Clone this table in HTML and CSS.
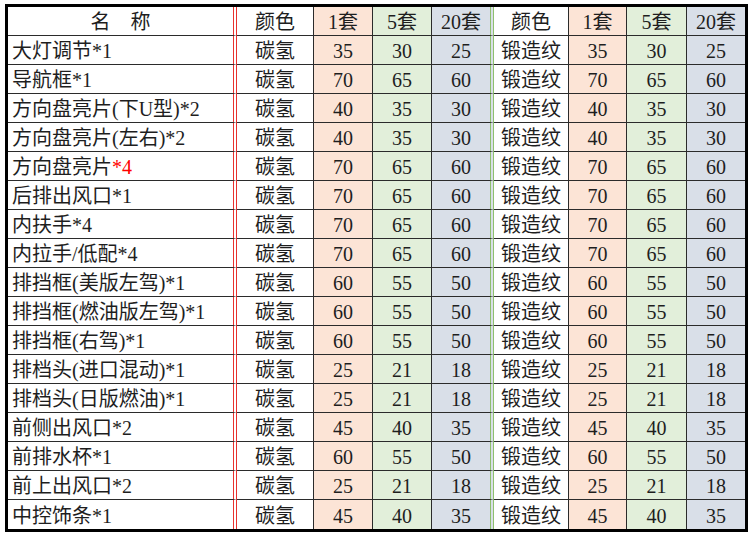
FILE: index.html
```html
<!DOCTYPE html>
<html lang="zh-CN">
<head>
<meta charset="utf-8">
<title>价格表</title>
<link rel="stylesheet" href="styles.css">
</head>
<body>
<table class="sheet">
  <tr class="head">
    <td class="name hname">名　称</td>
    <td class="color">颜色</td>
    <td class="p1">1套</td>
    <td class="p5">5套</td>
    <td class="p20 sep2">20套</td>
    <td class="color2">颜色</td>
    <td class="p1 w58">1套</td>
    <td class="p5 w60">5套</td>
    <td class="p20 w58">20套</td>
  </tr>
  <tr><td class="name">大灯调节*1</td><td class="color">碳氢</td><td class="p1">35</td><td class="p5">30</td><td class="p20 sep2">25</td><td class="color2">锻造纹</td><td class="p1">35</td><td class="p5">30</td><td class="p20">25</td></tr>
  <tr><td class="name">导航框*1</td><td class="color">碳氢</td><td class="p1">70</td><td class="p5">65</td><td class="p20 sep2">60</td><td class="color2">锻造纹</td><td class="p1">70</td><td class="p5">65</td><td class="p20">60</td></tr>
  <tr><td class="name">方向盘亮片(下U型)*2</td><td class="color">碳氢</td><td class="p1">40</td><td class="p5">35</td><td class="p20 sep2">30</td><td class="color2">锻造纹</td><td class="p1">40</td><td class="p5">35</td><td class="p20">30</td></tr>
  <tr><td class="name">方向盘亮片(左右)*2</td><td class="color">碳氢</td><td class="p1">40</td><td class="p5">35</td><td class="p20 sep2">30</td><td class="color2">锻造纹</td><td class="p1">40</td><td class="p5">35</td><td class="p20">30</td></tr>
  <tr><td class="name">方向盘亮片<span class="red">*4</span></td><td class="color">碳氢</td><td class="p1">70</td><td class="p5">65</td><td class="p20 sep2">60</td><td class="color2">锻造纹</td><td class="p1">70</td><td class="p5">65</td><td class="p20">60</td></tr>
  <tr><td class="name">后排出风口*1</td><td class="color">碳氢</td><td class="p1">70</td><td class="p5">65</td><td class="p20 sep2">60</td><td class="color2">锻造纹</td><td class="p1">70</td><td class="p5">65</td><td class="p20">60</td></tr>
  <tr><td class="name">内扶手*4</td><td class="color">碳氢</td><td class="p1">70</td><td class="p5">65</td><td class="p20 sep2">60</td><td class="color2">锻造纹</td><td class="p1">70</td><td class="p5">65</td><td class="p20">60</td></tr>
  <tr><td class="name">内拉手/低配*4</td><td class="color">碳氢</td><td class="p1">70</td><td class="p5">65</td><td class="p20 sep2">60</td><td class="color2">锻造纹</td><td class="p1">70</td><td class="p5">65</td><td class="p20">60</td></tr>
  <tr><td class="name">排挡框(美版左驾)*1</td><td class="color">碳氢</td><td class="p1">60</td><td class="p5">55</td><td class="p20 sep2">50</td><td class="color2">锻造纹</td><td class="p1">60</td><td class="p5">55</td><td class="p20">50</td></tr>
  <tr><td class="name">排挡框(燃油版左驾)*1</td><td class="color">碳氢</td><td class="p1">60</td><td class="p5">55</td><td class="p20 sep2">50</td><td class="color2">锻造纹</td><td class="p1">60</td><td class="p5">55</td><td class="p20">50</td></tr>
  <tr><td class="name">排挡框(右驾)*1</td><td class="color">碳氢</td><td class="p1">60</td><td class="p5">55</td><td class="p20 sep2">50</td><td class="color2">锻造纹</td><td class="p1">60</td><td class="p5">55</td><td class="p20">50</td></tr>
  <tr><td class="name">排档头(进口混动)*1</td><td class="color">碳氢</td><td class="p1">25</td><td class="p5">21</td><td class="p20 sep2">18</td><td class="color2">锻造纹</td><td class="p1">25</td><td class="p5">21</td><td class="p20">18</td></tr>
  <tr><td class="name">排档头(日版燃油)*1</td><td class="color">碳氢</td><td class="p1">25</td><td class="p5">21</td><td class="p20 sep2">18</td><td class="color2">锻造纹</td><td class="p1">25</td><td class="p5">21</td><td class="p20">18</td></tr>
  <tr><td class="name">前侧出风口*2</td><td class="color">碳氢</td><td class="p1">45</td><td class="p5">40</td><td class="p20 sep2">35</td><td class="color2">锻造纹</td><td class="p1">45</td><td class="p5">40</td><td class="p20">35</td></tr>
  <tr><td class="name">前排水杯*1</td><td class="color">碳氢</td><td class="p1">60</td><td class="p5">55</td><td class="p20 sep2">50</td><td class="color2">锻造纹</td><td class="p1">60</td><td class="p5">55</td><td class="p20">50</td></tr>
  <tr><td class="name">前上出风口*2</td><td class="color">碳氢</td><td class="p1">25</td><td class="p5">21</td><td class="p20 sep2">18</td><td class="color2">锻造纹</td><td class="p1">25</td><td class="p5">21</td><td class="p20">18</td></tr>
  <tr><td class="name">中控饰条*1</td><td class="color">碳氢</td><td class="p1">45</td><td class="p5">40</td><td class="p20 sep2">35</td><td class="color2">锻造纹</td><td class="p1">45</td><td class="p5">40</td><td class="p20">35</td></tr>
</table>
</body>
</html>
```

FILE: styles.css
```css
html, body {
  margin: 0;
  padding: 0;
  background: #ffffff;
}

.sheet {
  margin: 4px 0 0 5px;
  width: 743px;
  table-layout: fixed;
  border-collapse: separate;
  border-spacing: 0;
  border: 3px solid #000;
  font-family: "Liberation Serif", "Noto Sans CJK SC", serif;
  font-size: 20px;
  color: #1e1e1e;
}

.sheet td {
  box-sizing: border-box;
  height: 29px;
  padding: 2px 0 0 0;
  line-height: 26px;
  text-align: center;
  white-space: nowrap;
  overflow: hidden;
  border-right: 1px solid #2b2b2b;
  border-bottom: 1px solid #2b2b2b;
}

.sheet .head td {
  height: 28px;
}

.sheet tr:last-child td {
  border-bottom: 0;
}

.sheet td:last-child {
  border-right: 0;
}

.sheet .name {
  width: 229px;
  text-align: left;
  padding-left: 4px;
  border-right: 4px double #e8322f;
}

.sheet .hname {
  text-align: center;
  padding-left: 0;
}

.sheet .color {
  width: 77px;
  background: #ffffff;
}

.sheet .color2 {
  width: 75px;
  background: #ffffff;
}

.sheet .p1 {
  width: 59px;
  background: #fce4d6;
}

.sheet .p5 {
  width: 59px;
  background: #e2efda;
}

.sheet .p20 {
  width: 58px;
  background: #d9dfe8;
}

.sheet .sep2 {
  width: 62px;
  border-right: 4px double #8fbf6e;
}

.sheet .w58 {
  width: 58px;
}

.sheet .w60 {
  width: 60px;
}

.red {
  color: #ff0000;
}
```
